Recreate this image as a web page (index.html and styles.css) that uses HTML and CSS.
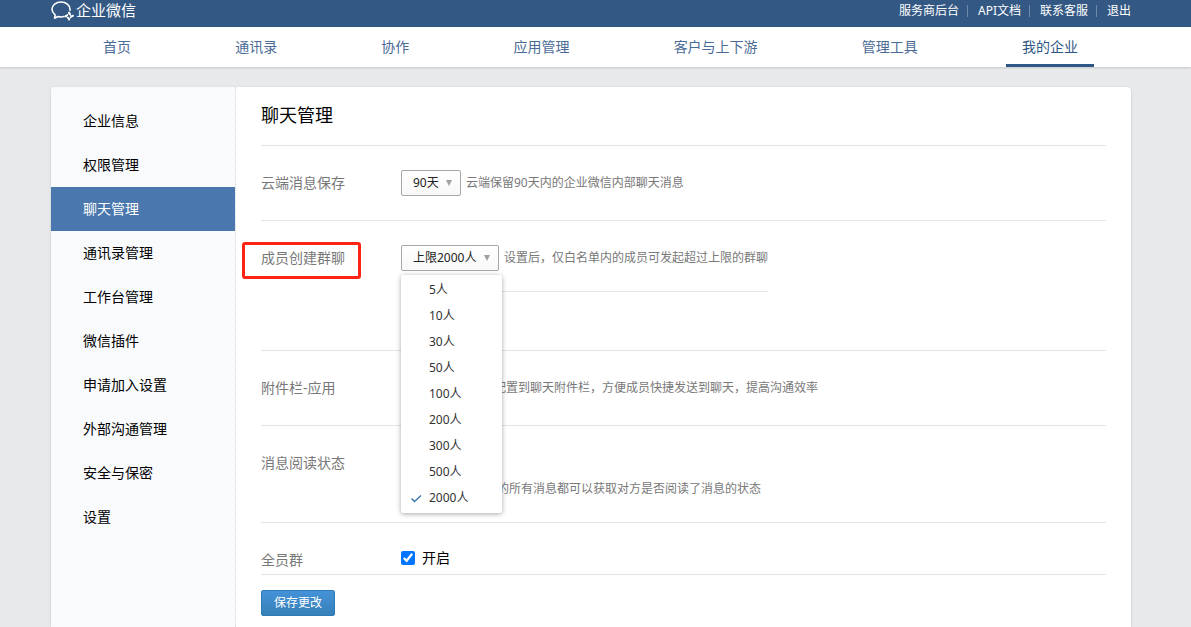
FILE: index.html
```
<!DOCTYPE html>
<html lang="zh-CN">
<head>
<meta charset="utf-8">
<title>企业微信 - 聊天管理</title>
<link rel="stylesheet" href="styles.css">
</head>
<body>
<header class="topbar">
  <a class="logo" href="#">
    <svg class="logo-mark" viewBox="0 0 24 22" width="24" height="22" fill="none" stroke="currentColor" stroke-linecap="round" stroke-linejoin="round" aria-hidden="true">
      <path stroke-width="1.6" d="M13 16.600c-2 .6-4.200.5-6.100-.1L3.600 18.200l.5-3.400C2.200 13.200 1 11.300 1 9.200c0-4 4-7.200 9-7.200s9 3.200 9 7.200v1"/>
      <path stroke-width="2" d="M18 12.600l1 1.500M22 15.700l-1.700 1M18.200 19.500l-1-1.600M14.400 16.300l1.700-1"/>
      <path stroke-width="1" d="M19 14.100l1.300 2.600M20.300 16.700l-2.100 2.500M17.200 17.900l-2.600-1.700M16.100 15.300l2-2.600"/>
    </svg>
    <span>企业微信</span>
  </a>
  <ul class="toplinks">
    <li><a href="#">服务商后台</a></li>
    <li><a href="#">API文档</a></li>
    <li><a href="#">联系客服</a></li>
    <li><a href="#">退出</a></li>
  </ul>
</header>
<nav class="mainnav">
  <a href="#">首页</a>
  <a href="#">通讯录</a>
  <a href="#">协作</a>
  <a href="#">应用管理</a>
  <a href="#">客户与上下游</a>
  <a href="#">管理工具</a>
  <a class="current" href="#">我的企业</a>
</nav>
<div class="page">
  <nav class="sidebar">
    <a href="#">企业信息</a>
    <a href="#">权限管理</a>
    <a class="active" href="#">聊天管理</a>
    <a href="#">通讯录管理</a>
    <a href="#">工作台管理</a>
    <a href="#">微信插件</a>
    <a href="#">申请加入设置</a>
    <a href="#">外部沟通管理</a>
    <a href="#">安全与保密</a>
    <a href="#">设置</a>
  </nav>
  <main class="content">
    <h1 class="title">聊天管理</h1>
    <form>
      <div class="row">
        <label class="row-label" for="cloud">云端消息保存</label>
        <div class="line">
          <span class="dropdown"><select id="cloud" class="select-days"><option>90天</option></select></span>
          <span class="hint">云端保留90天内的企业微信内部聊天消息</span>
        </div>
      </div>
      <div class="row row-limit">
        <label class="row-label framed" for="limit">成员创建群聊</label>
        <div class="line line-ruled">
          <span class="dropdown"><select id="limit" class="select-limit"><option>上限2000人</option></select></span>
          <span class="hint">设置后，仅白名单内的成员可发起超过上限的群聊</span>
          <ul class="menu" role="listbox" aria-label="成员创建群聊">
            <li role="option">5人</li>
            <li role="option">10人</li>
            <li role="option">30人</li>
            <li role="option">50人</li>
            <li role="option">100人</li>
            <li role="option">200人</li>
            <li role="option">300人</li>
            <li role="option">500人</li>
            <li role="option" aria-selected="true"><svg class="tick" viewBox="0 0 12 10" width="12" height="10" fill="none" stroke="currentColor" stroke-width="1.500" aria-hidden="true"><path d="M1.500 5.500l3 3L11 2.500"/></svg>2000人</li>
          </ul>
        </div>
      </div>
      <div class="row">
        <span class="row-label">附件栏-应用</span>
        <div class="line line-inset">
          <span class="hint">配置到聊天附件栏，方便成员快捷发送到聊天，提高沟通效率</span>
        </div>
      </div>
      <div class="row row-read">
        <span class="row-label">消息阅读状态</span>
        <p class="hint">的所有消息都可以获取对方是否阅读了消息的状态</p>
      </div>
      <div class="row row-last">
        <span class="row-label">全员群</span>
        <label class="check"><input type="checkbox" checked>开启</label>
      </div>
      <button class="save" type="button">保存更改</button>
    </form>
  </main>
</div>
</body>
</html>
```
FILE: styles.css
```
* { box-sizing: border-box; }

body {
  margin: 0;
  min-height: 100vh;
  display: flex;
  flex-direction: column;
  background: #e8e9eb;
  color: #000;
  font: 14px/22px "Noto Sans", "Noto Sans CJK SC", sans-serif;
}

a { color: inherit; text-decoration: none; }
ul { margin: 0; padding: 0; list-style: none; }

.topbar {
  display: flex;
  justify-content: space-between;
  height: 27px;
  padding: 0 60px 0 51px;
  background: #335884;
  color: #fff;
}

.logo {
  display: flex;
  gap: 1px;
  font-size: 15px;
  line-height: 20px;
}

.toplinks { display: flex; font-size: 12px; }
.toplinks li { display: flex; align-items: center; height: 22px; }
.toplinks li + li::before {
  content: "";
  height: 12px;
  margin: 0 10px 0 8px;
  border-left: 1px solid #6d8aab;
}

.mainnav {
  display: flex;
  justify-content: space-between;
  padding: 0 97px 0 87px;
  background: #fff;
  color: #4a6b96;
  box-shadow: 0 1px 2px rgba(0, 0, 0, 0.15);
}
.mainnav a {
  padding: 3px 16px 0;
  line-height: 34px;
  border-bottom: 3px solid transparent;
}
.mainnav .current { color: #2f5785; border-color: #2f5785; }

.page {
  flex: 1;
  display: flex;
  margin: 20px 60px 0 51px;
  background: #fff;
  border-radius: 4px 4px 0 0;
  box-shadow: 0 1px 3px rgba(0, 0, 0, 0.15);
}

.sidebar {
  flex: 0 0 185px;
  padding-top: 12px;
  background: #f9fafc;
  border-right: 1px dotted #d5d8dc;
  border-radius: 4px 0 0 0;
}
.sidebar a { display: block; padding-left: 32px; line-height: 44px; }
.sidebar .active { background: #4a77ad; color: #fff; }

.content { flex: 1; padding: 0 25px; }

.title {
  margin: 0;
  padding: 14px 0 16px;
  border-bottom: 1px solid #e3e4e6;
  font-size: 18px;
  font-weight: 400;
  line-height: 28px;
}

.row {
  display: flex;
  align-items: flex-start;
  padding: 24px 0;
  border-bottom: 1px solid #e3e4e6;
}
.row-limit { padding-bottom: 58px; }
.row-read { padding-bottom: 21px; }
.row-read .hint { padding: 27px 0 0 96px; }
.row-last { padding-bottom: 1px; }

.row-label {
  position: relative;
  flex: 0 0 140px;
  color: #787878;
  line-height: 26px;
}
.framed::after {
  content: "";
  position: absolute;
  top: -3px;
  right: 40px;
  bottom: -8px;
  left: -19px;
  border: 3px solid #ff2414;
  border-radius: 3px;
}

.line {
  position: relative;
  display: flex;
  align-items: center;
  gap: 5px;
  min-height: 26px;
}
.line-ruled {
  min-height: 47px;
  padding-bottom: 20px;
  border-bottom: 1px solid #e3e4e6;
}
.line-inset { padding-left: 93px; }

.hint { margin: 0; color: #787878; font-size: 12px; line-height: 24px; }

.dropdown { position: relative; display: flex; }
.dropdown select {
  appearance: none;
  height: 26px;
  margin: 0;
  padding: 0 0 0 11px;
  border: 1px solid #a6a6a6;
  border-radius: 2px;
  background: linear-gradient(#fff, #f8f8f8);
  color: #222;
  font: 12px/24px "Noto Sans", "Noto Sans CJK SC", sans-serif;
}
.dropdown .select-days { width: 60px; }
.dropdown .select-limit { width: 98px; }
.dropdown::after {
  content: "";
  position: absolute;
  top: 10px;
  right: 9px;
  border: 3px solid transparent;
  border-top: 6px solid #a0a0a0;
  border-bottom: 0;
}

.menu {
  position: absolute;
  top: 30px;
  left: 0;
  z-index: 1;
  width: 101px;
  padding: 2px 0;
  background: #fff;
  border-radius: 2px;
  box-shadow: 0 1px 5px rgba(0, 0, 0, 0.35);
  color: #333;
  font-size: 12px;
  line-height: 26px;
}
.menu li { position: relative; padding-left: 28px; }
.tick { position: absolute; top: 8px; left: 9px; color: #3f76b0; }

.check { display: flex; align-items: center; gap: 7px; }
.check input { width: 14px; height: 14px; margin: 0; accent-color: #0075ff; }

.save {
  display: block;
  height: 26px;
  margin-top: 15px;
  padding: 0 12px;
  border: 1px solid #2b7cb9;
  border-radius: 2px;
  background: linear-gradient(#4492d8, #3780b8);
  color: #fff;
  font: 12px/24px "Noto Sans", "Noto Sans CJK SC", sans-serif;
}
```
